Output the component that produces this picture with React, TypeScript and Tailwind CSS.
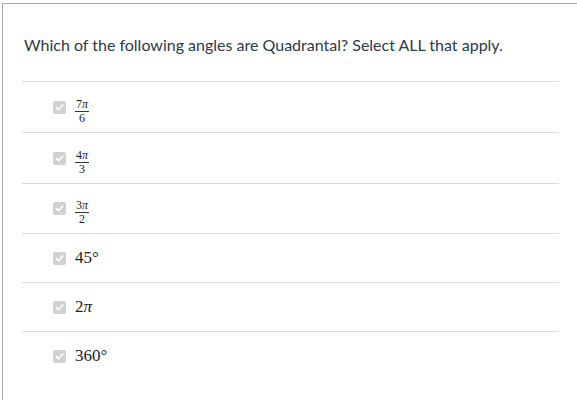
import React from 'react'

type Answer = {
  id: number
  kind: 'frac' | 'plain'
  num?: React.ReactNode
  den?: string
  text?: React.ReactNode
  h: string
}

const serif = { fontFamily: '"Liberation Serif", "Times New Roman", serif' }

const Pi = () => <span className="font-serif italic" style={serif}>π</span>

const answers: Answer[] = [
  { id: 1, kind: 'frac', num: <>7<Pi /></>, den: '6', h: 'h-[51px]' },
  { id: 2, kind: 'frac', num: <>4<Pi /></>, den: '3', h: 'h-[51px]' },
  { id: 3, kind: 'frac', num: <>3<Pi /></>, den: '2', h: 'h-[50px]' },
  { id: 4, kind: 'plain', text: <>45°</>, h: 'h-[49px]' },
  { id: 5, kind: 'plain', text: <>2<Pi /></>, h: 'h-[49px]' },
  { id: 6, kind: 'plain', text: <>360°</>, h: 'h-[49px]' },
]

const CheckBox = () => (
  <span className="flex h-[13px] w-[13px] shrink-0 items-center justify-center rounded-[2px] bg-[#d1d1d1]">
    <svg width="9" height="9" viewBox="0 0 10 10" fill="none">
      <path d="M1.5 5.2 L4 7.5 L8.6 2.2" stroke="#ffffff" strokeWidth="1.8" strokeLinecap="round" strokeLinejoin="round" />
    </svg>
  </span>
)

const App = () => {
  return (
    <div className="min-h-[400px] w-[577px] bg-white pl-[2px] pt-[3px]">
      <div className="h-[397px] border-l border-t border-[#a3a3a3] pl-[19px] pr-[18px]">
        <p
          className="pt-[29px] pl-[2px] text-[16px] leading-[24px] text-[#2d3b45]"
          style={{ fontFamily: 'Lato, sans-serif' }}
        >
          Which of the following angles are Quadrantal? Select ALL that apply.
        </p>
        <div className="mt-[24px]">
          {answers.map((a) => (
            <div
              key={a.id}
              className={`flex items-center border-t border-[#dcdcdc] pl-[31px] ${a.h}`}
            >
              <CheckBox />
              <div className="ml-[9px] font-serif text-[#222]" style={serif}>
                {a.kind === 'frac' ? (
                  <span className="inline-flex flex-col items-center font-serif text-[12px] leading-[11px]" style={serif}>
                    <span className="px-[1px] pb-[1px]">{a.num}</span>
                    <span className="w-full border-t border-[#333] pt-[1px] text-center">{a.den}</span>
                  </span>
                ) : (
                  <span className="font-serif text-[17px]" style={serif}>{a.text}</span>
                )}
              </div>
            </div>
          ))}
        </div>
      </div>
    </div>
  )
}

export default App
